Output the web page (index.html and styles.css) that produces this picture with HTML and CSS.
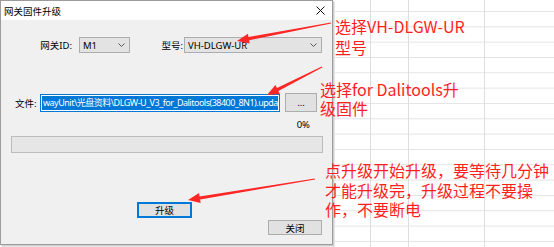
FILE: index.html
```html
<!DOCTYPE html>
<html lang="zh-CN">
<head>
    <meta charset="UTF-8">
    <title>网关固件升级</title>
    <link rel="stylesheet" href="styles.css">
</head>
<body>
    <div class="dialog">
        <div class="titlebar">
            <span class="title">网关固件升级</span>
            <svg class="close" width="9" height="9" viewBox="0 0 9 9">
                <path d="M0.5 0.5L8.5 8.5M8.5 0.5L0.5 8.5" stroke="#111" stroke-width="1" fill="none"/>
            </svg>
        </div>

        <div class="dialog-body">
            <div class="row row-ids">
                <span class="label label-id">网关ID:</span>
                <div class="combo combo-id">
                    <span class="combo-text">M1</span>
                    <svg class="chevron" width="7" height="4" viewBox="0 0 7 4"><path d="M0.5 0.5L3.5 3.5L6.5 0.5" fill="none" stroke="#555"/></svg>
                </div>
                <span class="label label-model">型号:</span>
                <div class="combo combo-model">
                    <span class="combo-text">VH-DLGW-UR</span>
                    <svg class="chevron" width="7" height="4" viewBox="0 0 7 4"><path d="M0.5 0.5L3.5 3.5L6.5 0.5" fill="none" stroke="#555"/></svg>
                </div>
            </div>

            <div class="row row-file">
                <span class="label label-file">文件:</span>
                <div class="textbox">
                    <div class="selection">wayUnit\光盘资料\DLGW-U_V3_for_Dalitools(38400_8N1).upda</div>
                </div>
                <div class="button button-browse">...</div>
            </div>

            <div class="percent">0%</div>
            <div class="progress"></div>

            <div class="button button-upgrade">升级</div>
            <div class="button button-close">关闭</div>
        </div>
    </div>

    <!-- annotations drawn over the screenshot -->
    <div class="note note-model">选择VH-DLGW-UR<br>型号</div>
    <div class="note note-file">选择for Dalitools升<br>级固件</div>
    <div class="note note-upgrade">点升级开始升级，要等待几分钟<br>才能升级完，升级过程不要操<br>作，不要断电</div>

    <svg class="arrows" width="554" height="247" viewBox="0 0 554 247">
        <polygon points="331.1,23.4 249.1,40.3 249.7,43.6 237,41 247.9,33.8 248.5,37.1 330.9,22.6"/>
        <polygon points="322.2,67.4 278.4,91.0 280.0,94.0 267,95 275.4,85.1 277.0,88.1 321.8,66.6"/>
        <polygon points="315.1,179.4 200.1,199.6 200.7,203.0 188,200 199.0,193.1 199.6,196.5 314.9,178.6"/>
    </svg>
</body>
</html>
```

FILE: styles.css
```css
* {
    margin: 0;
    padding: 0;
    box-sizing: border-box;
}

html, body {
    width: 554px;
    height: 247px;
    overflow: hidden;
}

/* spreadsheet behind the dialog */
body {
    position: relative;
    font-family: "Noto Sans", "Noto Sans CJK SC", sans-serif;
    font-size: 9.5px;
    color: #000;
    background-color: #fff;
    background-image:
        linear-gradient(#dedede, #dedede),
        linear-gradient(#dedede, #dedede),
        linear-gradient(#dedede, #dedede),
        linear-gradient(#e3e3e3 1px, transparent 1px);
    background-size: 1px 100%, 1px 100%, 1px 100%, 100% 15.333px;
    background-position: 370px 0, 408px 0, 484px 0, 0 11px;
    background-repeat: no-repeat, no-repeat, no-repeat, repeat;
}

.dialog {
    width: 333px;
    height: 245px;
    display: flex;
    flex-direction: column;
    border: 1px solid #9c9c9c;
    box-shadow: 1px 1px 0 #cfcfcf, 2px 2px 0 #e6e6e6;
}

.titlebar {
    height: 19px;
    background: #fff;
    display: flex;
    align-items: center;
    justify-content: space-between;
    padding: 0 7px 0 3px;
}

.dialog-body {
    flex: 1;
    background: #f0f0f0;
}

.row {
    display: flex;
}

.row-ids {
    margin-top: 17px;
    height: 16px;
    align-items: center;
}

.label {
    white-space: nowrap;
}

.label-id {
    width: 71px;
    text-align: right;
}

.label-model {
    width: 27px;
    margin-left: 26px;
    text-align: right;
}

.combo {
    height: 16px;
    display: flex;
    align-items: center;
    justify-content: space-between;
    padding: 0 4px 0 3px;
    background: #e3e3e3;
    border: 1px solid #adadad;
}

.combo-id {
    width: 51px;
    margin-left: 7px;
}

.combo-model {
    width: 138px;
    margin-left: 1px;
}

.row-file {
    margin-top: 40px;
    height: 19px;
    align-items: flex-end;
}

.label-file {
    width: 25px;
    margin-left: 14px;
    align-self: center;
}

.textbox {
    width: 240px;
    height: 18px;
    padding: 1px;
    background: #fff;
    border: 1px solid #0078d7;
}

.selection {
    height: 100%;
    line-height: 14px;
    padding-left: 1px;
    font-size: 9px;
    letter-spacing: -0.5px;
    background: #0078d7;
    color: #fff;
    white-space: nowrap;
    overflow: hidden;
}

.button {
    display: flex;
    align-items: center;
    justify-content: center;
    background: #e1e1e1;
    border: 1px solid #adadad;
}

.button-browse {
    width: 32px;
    height: 19px;
    margin-left: 5px;
}

.percent {
    margin-top: 7px;
    height: 12px;
    line-height: 12px;
    text-align: right;
    padding-right: 22px;
}

.progress {
    width: 312px;
    height: 17px;
    margin: 5px 0 0 10px;
    background: #e6e6e6;
    border: 1px solid #bcbcbc;
}

.button-upgrade {
    width: 55px;
    height: 16px;
    margin: 49px 0 0 136px;
    border: 2px solid #0078d7;
}

.button-close {
    width: 54px;
    height: 15px;
    margin: 2px 0 0 267px;
}

/* red callouts */
.note {
    position: absolute;
    font-family: "Noto Sans CJK SC", sans-serif;
    font-size: 16px;
    color: #ff1f1f;
    white-space: nowrap;
}

.note-model {
    left: 335px;
    top: 16px;
    line-height: 21px;
}

.note-file {
    left: 320px;
    top: 80px;
    line-height: 19px;
}

.note-upgrade {
    left: 325px;
    top: 161px;
    line-height: 19.5px;
}

.arrows {
    position: absolute;
    left: 0;
    top: 0;
    fill: #ff2626;
}
```
